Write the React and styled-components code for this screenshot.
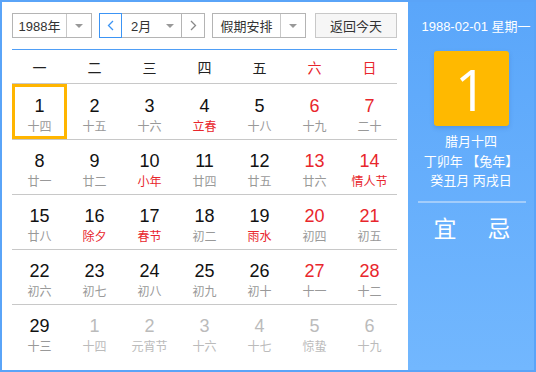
import React from 'react';
import styled, { createGlobalStyle } from 'styled-components';

const GlobalStyle = createGlobalStyle`
  html, body { margin: 0; padding: 0; background: #fff; }
  body { font-family: "Liberation Sans", "Noto Sans CJK SC", sans-serif; }
`

const Calendar = styled.div`
  width: 536px;
  height: 372px;
  box-sizing: border-box;
  border: 2px solid #5aa4f8;
  display: flex;
  overflow: hidden;
`

const Main = styled.div`
  width: 406px;
  flex: none;
  box-sizing: border-box;
  padding: 11px 11px 0 10px;
  background: #fff;
`

const Toolbar = styled.div`
  display: flex;
  height: 25px;
  padding-bottom: 11px;
  border-bottom: 1px solid #4f9ef6;
`

const SelectBox = styled.div`
  display: flex;
  width: ${p => p.w}px;
  margin-left: ${p => p.ml || 0}px;
  box-sizing: border-box;
  border: 1px solid #b4b4b4;
  background: #fff;
  font-size: 13px;
  color: #333;
`

const SelectText = styled.div`
  flex: 1;
  display: flex;
  align-items: center;
  justify-content: ${p => p.left ? 'flex-start' : 'center'};
  padding-left: ${p => p.left ? 9 : 0}px;
`

const Caret = styled.div`
  width: ${p => p.w || 23}px;
  display: flex;
  align-items: center;
  justify-content: center;
  border-left: ${p => p.line ? '1px solid #c8c8c8' : 'none'};
  &::after {
    content: '';
    border-left: 4px solid transparent;
    border-right: 4px solid transparent;
    border-top: 4px solid #999;
  }
`

const NavButton = styled.div`
  width: ${p => p.w}px;
  margin-left: ${p => p.ml || 0}px;
  box-sizing: border-box;
  border: 1px solid ${p => p.active ? '#3c94f4' : '#b4b4b4'};
  background: #fff;
  display: flex;
  align-items: center;
  justify-content: center;
  color: ${p => p.active ? '#3c94f4' : '#888'};
  position: relative;
  z-index: ${p => p.active ? 1 : 0};
`

const Button = styled.div`
  width: 82px;
  margin-left: 9px;
  box-sizing: border-box;
  border: 1px solid #c8c8c8;
  background: #f6f6f6;
  display: flex;
  align-items: center;
  justify-content: center;
  font-size: 13px;
  color: #333;
`

const WeekRow = styled.div`
  display: grid;
  grid-template-columns: repeat(7, 55px);
  height: 33px;
  align-items: center;
  border-bottom: 1px solid #c8c8c8;
`

const WeekName = styled.div`
  text-align: center;
  font-size: 14px;
  color: ${p => p.red ? '#e8262c' : '#222'};
`

const Row = styled.div`
  display: grid;
  grid-template-columns: repeat(7, 55px);
  height: 55px;
  box-sizing: border-box;
  border-top: ${p => p.first ? 'none' : '1px solid #c8c8c8'};
`

const Cell = styled.div`
  display: flex;
  flex-direction: column;
  align-items: center;
  box-sizing: border-box;
  padding-top: ${p => p.first ? 11 : 10}px;
  height: ${p => p.first ? 55 : 54}px;
  box-shadow: ${p => p.selected ? 'inset 0 0 0 3px #ffb500' : 'none'};
  margin-top: ${p => p.selected && !p.first ? -1 : 0}px;
`

const DayNum = styled.div`
  font-size: 18px;
  line-height: 22px;
  color: ${p => p.tone === 'other' ? '#bbb' : p.tone === 'red' ? '#e8262c' : '#111'};
`

const Lunar = styled.div`
  font-size: 12px;
  line-height: 16px;
  margin-top: 2px;
  color: ${p => p.tone === 'other' ? '#bbb' : p.tone === 'red' ? '#e8262c' : '#999'};
`

const Side = styled.div`
  flex: 1;
  background: linear-gradient(180deg, #5aa6fa 0%, #72b7fe 100%);
  color: #fff;
  display: flex;
  flex-direction: column;
  align-items: center;
  padding-top: 16px;
`

const DateLine = styled.div`
  font-size: 13px;
  line-height: 18px;
  padding-left: 10px;
  white-space: nowrap;
`

const DayBox = styled.div`
  width: 75px;
  height: 75px;
  margin-top: 15px;
  background: #ffb900;
  border-radius: 3px;
  box-shadow: 0 2px 4px rgba(40, 90, 160, 0.25);
  display: flex;
  align-items: center;
  justify-content: center;
  font-size: 56px;
  font-weight: 400;
  font-family: "Open Sans", "Liberation Sans", sans-serif;
`

const LunarInfo = styled.div`
  margin-top: 6px;
  font-size: 13px;
  line-height: 19.5px;
  text-align: center;
`

const Divider = styled.div`
  align-self: stretch;
  height: 2px;
  margin: 10px 8px 0 10px;
  background: #a3cdfb;
`

const YiJi = styled.div`
  display: flex;
  gap: 31px;
  margin-top: 11px;
  font-size: 23px;
  line-height: 30px;
  padding-left: 2px;
`

const weeks = ['一', '二', '三', '四', '五', '六', '日'];

// [day, lunar, numberTone, lunarTone]
const rows = [
  [[1, '十四'], [2, '十五'], [3, '十六'], [4, '立春', '', 'red'], [5, '十八'], [6, '十九', 'red'], [7, '二十', 'red']],
  [[8, '廿一'], [9, '廿二'], [10, '小年', '', 'red'], [11, '廿四'], [12, '廿五'], [13, '廿六', 'red'], [14, '情人节', 'red', 'red']],
  [[15, '廿八'], [16, '除夕', '', 'red'], [17, '春节', '', 'red'], [18, '初二'], [19, '雨水', '', 'red'], [20, '初四', 'red'], [21, '初五', 'red']],
  [[22, '初六'], [23, '初七'], [24, '初八'], [25, '初九'], [26, '初十'], [27, '十一', 'red'], [28, '十二', 'red']],
  [[29, '十三'], [1, '十四', 'other', 'other'], [2, '元宵节', 'other', 'other'], [3, '十六', 'other', 'other'], [4, '十七', 'other', 'other'], [5, '惊蛰', 'other', 'other'], [6, '十九', 'other', 'other']],
];

const Chevron = ({ dir }) => (
  <svg width="7" height="11" viewBox="0 0 7 11">
    <path d={dir === 'left' ? 'M6 1 L1.5 5.5 L6 10' : 'M1 1 L5.5 5.5 L1 10'} fill="none" stroke="currentColor" strokeWidth="1.3" />
  </svg>
);

const App = () => {
  return (
    <>
      <GlobalStyle />
      <Calendar>
        <Main>
          <Toolbar>
            <SelectBox w={80}>
              <SelectText>1988年</SelectText>
              <Caret line w={24} />
            </SelectBox>
            <NavButton w={23} ml={7} active><Chevron dir="left" /></NavButton>
            <SelectBox w={61} ml={-1}>
              <SelectText left>2月</SelectText>
              <Caret w={22} />
            </SelectBox>
            <NavButton w={24} ml={-1}><Chevron dir="right" /></NavButton>
            <SelectBox w={94} ml={7}>
              <SelectText>假期安排</SelectText>
              <Caret line w={24} />
            </SelectBox>
            <Button>返回今天</Button>
          </Toolbar>
          <WeekRow>
            {weeks.map((w, i) => <WeekName key={w} red={i > 4}>{w}</WeekName>)}
          </WeekRow>
          {rows.map((r, ri) => (
            <Row key={ri} first={ri === 0}>
              {r.map(([d, l, nt, lt], ci) => (
                <Cell key={ci} first={ri === 0} selected={ri === 0 && ci === 0}>
                  <DayNum tone={nt}>{d}</DayNum>
                  <Lunar tone={lt}>{l}</Lunar>
                </Cell>
              ))}
            </Row>
          ))}
        </Main>
        <Side>
          <DateLine>1988-02-01 星期一</DateLine>
          <DayBox>1</DayBox>
          <LunarInfo>
            腊月十四<br />
            丁卯年 【兔年】<br />
            癸丑月 丙戌日
          </LunarInfo>
          <Divider />
          <YiJi>
            <span>宜</span>
            <span>忌</span>
          </YiJi>
        </Side>
      </Calendar>
    </>
  );
}

export default App;
